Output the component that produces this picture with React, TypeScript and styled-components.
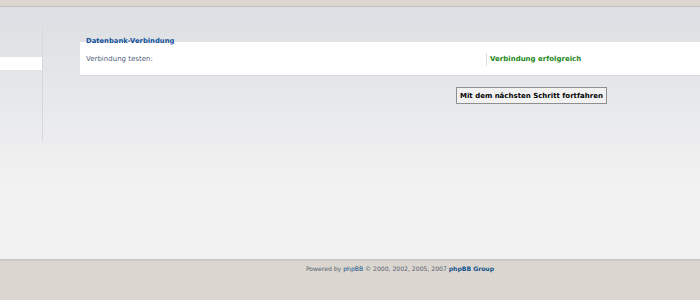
import React from "react";
import styled, { createGlobalStyle } from "styled-components";

const GlobalStyle = createGlobalStyle`
  html, body {
    margin: 0;
    padding: 0;
  }
  body {
    font-family: "DejaVu Sans", Verdana, sans-serif;
    font-size: 7px;
    overflow: hidden;
  }
`;

const Page = styled.div`
  width: 700px;
  height: 300px;
  display: flex;
  flex-direction: column;
  overflow: hidden;
`;

const TopBar = styled.div`
  height: 6px;
  background: #dcd6d0;
  border-bottom: 1px solid #c4c1bd;
`;

const Main = styled.div`
  flex: 1;
  display: flex;
  align-items: flex-start;
  background: linear-gradient(#dcdfe3 0%, #e8e9eb 40%, #f2f2f2 72%, #f2f2f2 100%);
`;

const Sidebar = styled.div`
  width: 42px;
  height: 113px;
  margin-top: 21px;
  border-right: 1px solid #d5d7da;
`;

const MenuItem = styled.div`
  height: 13px;
  margin-top: 29px;
  background: #ffffff;
`;

const Content = styled.div`
  flex: 1;
  margin-left: 37px;
  padding-top: 29px;
`;

const Fieldset = styled.fieldset`
  margin: 0;
  padding: 0 0 9px 6px;
  border: none;
  background: #ffffff;
  box-shadow: 0 1px 0 #d8d9db;
`;

const Legend = styled.legend`
  padding: 0;
  font-size: 6.8px;
  font-weight: bold;
  color: #115098;
  line-height: 11px;
`;

const Row = styled.div`
  display: flex;
  align-items: center;
  margin-top: 6px;
`;

const Label = styled.div`
  width: 400px;
  color: #536482;
  line-height: 13px;
`;

const Value = styled.div`
  border-left: 1px solid #dddddd;
  padding-left: 3px;
  line-height: 13px;
  font-weight: bold;
  color: #228822;
`;

const Buttons = styled.div`
  padding: 12px 0 0 376px;
`;

const Button = styled.button`
  height: 17px;
  padding: 0 3px;
  font-family: inherit;
  font-size: 7px;
  font-weight: bold;
  color: #000000;
  background: #f1f1f1;
  border: 1px solid #8f8f8f;
  border-radius: 0;
`;

const Footer = styled.div`
  height: 36px;
  background: #dbd6d0;
  border-top: 2px solid #c9c9c9;
  padding: 3px 0 0 100px;
  text-align: center;
  font-size: 6.1px;
  color: #555f6e;
  line-height: 10px;
`;

const FooterLink = styled.a<{ $strong?: boolean }>`
  color: #105289;
  text-decoration: none;
  font-weight: ${(p) => (p.$strong ? "bold" : "normal")};
`;

const App = () => {
  return (
    <>
      <GlobalStyle />
      <Page>
        <TopBar />
        <Main>
          <Sidebar>
            <MenuItem />
          </Sidebar>
          <Content>
            <Fieldset>
              <Legend>Datenbank-Verbindung</Legend>
              <Row>
                <Label>Verbindung testen:</Label>
                <Value>Verbindung erfolgreich</Value>
              </Row>
            </Fieldset>
            <Buttons>
              <Button>Mit dem nächsten Schritt fortfahren</Button>
            </Buttons>
          </Content>
        </Main>
        <Footer>
          Powered by <FooterLink href="#">phpBB</FooterLink> © 2000, 2002, 2005, 2007{" "}
          <FooterLink href="#" $strong>
            phpBB Group
          </FooterLink>
        </Footer>
      </Page>
    </>
  );
};

export default App;
